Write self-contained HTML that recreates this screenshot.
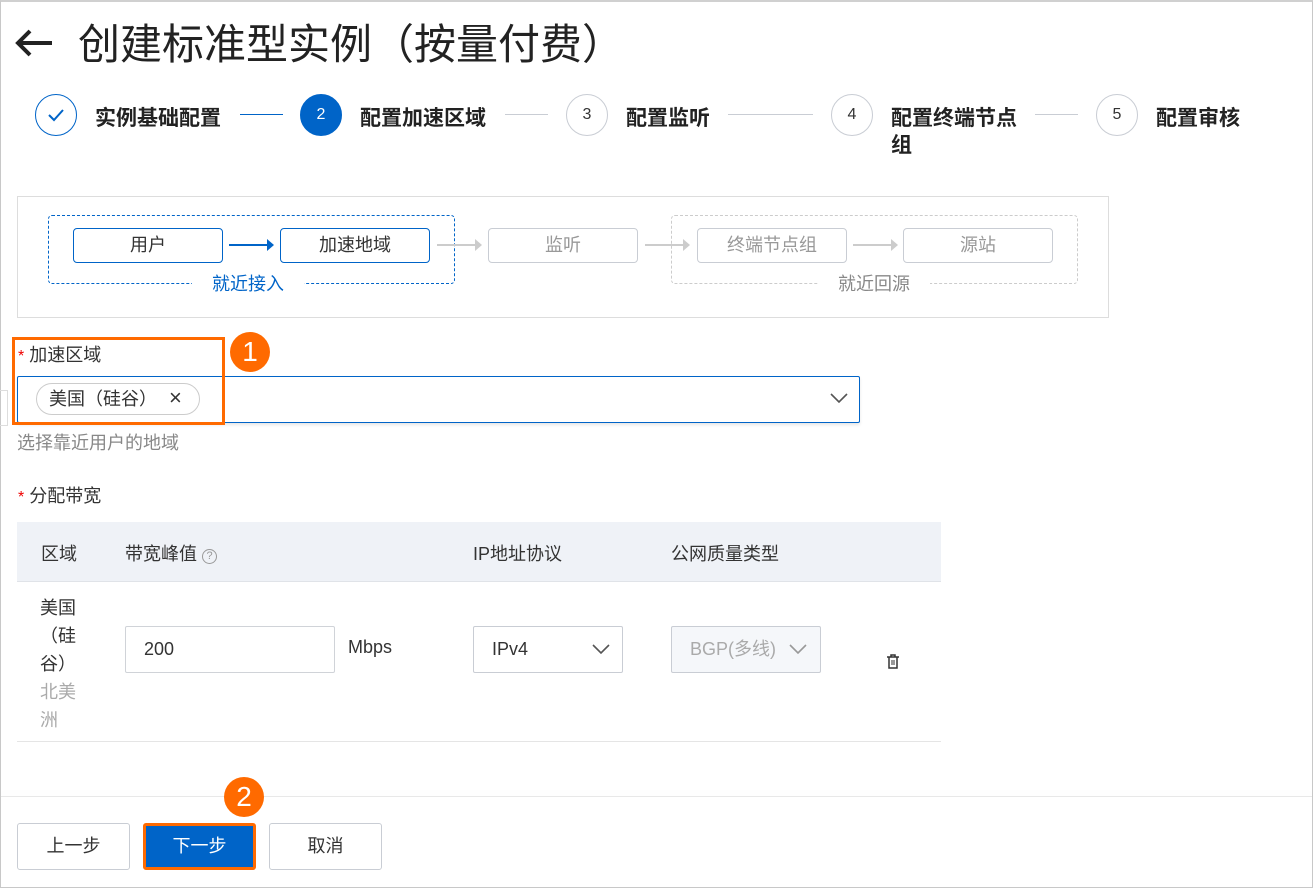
<!DOCTYPE html>
<html><head><meta charset="utf-8"><style>
*{margin:0;padding:0;box-sizing:border-box}
body{width:1313px;height:888px;position:relative;background:#fff;font-family:"Liberation Sans","Noto Sans CJK SC",sans-serif;color:#333;overflow:hidden}
.a{position:absolute}
.frame{left:0;top:0;width:1313px;height:888px;border:1px solid #c8c8c8;border-top:2px solid #d0d0d0}
.circ{width:42px;height:42px;border-radius:50%;border:1px solid #c9cdd4;text-align:center;line-height:40px;font-size:16px;color:#333;top:94px}
.sl{font-size:21px;font-weight:bold;color:#222;top:105px;line-height:27px}
.ln{height:1px;top:114px;background:#c9cdd4}
.nb{height:35px;width:150px;border:1px solid #c9cdd4;border-radius:4px;text-align:center;line-height:33px;font-size:18px;color:#999;top:228px}
.nb.b{border-color:#0064c8;color:#333}
.ar{top:237px;height:16px}
.cap{top:273px;font-size:18px;background:#fff;padding:0 20px;line-height:22px}
.th{top:540px;font-size:18px;color:#333}
.btn{top:823px;height:47px;width:113px;border:1px solid #c9cdd4;border-radius:3px;text-align:center;line-height:45px;font-size:18px;color:#333}
.badge{width:40px;height:40px;border-radius:50%;background:#ff6a00;color:#fff;font-size:28px;text-align:center;line-height:40px;font-family:"Liberation Sans",sans-serif}
</style></head><body>
<div class="a frame"></div>
<svg class="a" style="left:14px;top:28px" width="40" height="30" viewBox="0 0 40 30"><path d="M38 15H4M16 3L4 15l12 12" fill="none" stroke="#222" stroke-width="4"/></svg>
<div class="a" style="left:78px;top:17px;font-size:42px;line-height:56px;color:#222">创建标准型实例（按量付费）</div>

<div class="a circ" style="left:35px;border-color:#0064c8"><svg width="20" height="16" viewBox="0 0 20 16" style="margin-top:12px"><path d="M3 8l5 5 9-10" fill="none" stroke="#0064c8" stroke-width="2"/></svg></div>
<div class="a sl" style="left:95px">实例基础配置</div>
<div class="a ln" style="left:240px;width:43px;background:#0064c8"></div>
<div class="a circ" style="left:300px;background:#0064c8;border-color:#0064c8;color:#fff">2</div>
<div class="a sl" style="left:360px">配置加速区域</div>
<div class="a ln" style="left:505px;width:43px"></div>
<div class="a circ" style="left:566px">3</div>
<div class="a sl" style="left:626px">配置监听</div>
<div class="a ln" style="left:728px;width:85px"></div>
<div class="a circ" style="left:831px">4</div>
<div class="a sl" style="left:891px;width:135px">配置终端节点<br>组</div>
<div class="a ln" style="left:1035px;width:43px"></div>
<div class="a circ" style="left:1096px">5</div>
<div class="a sl" style="left:1156px">配置审核</div>

<div class="a" style="left:17px;top:196px;width:1092px;height:122px;border:1px solid #ddd"></div>
<div class="a" style="left:48px;top:215px;width:407px;height:69px;border:1px dashed #0064c8;border-radius:4px"></div>
<div class="a" style="left:671px;top:215px;width:407px;height:69px;border:1px dashed #ccc;border-radius:4px"></div>
<div class="a nb b" style="left:73px">用户</div>
<div class="a nb b" style="left:280px">加速地域</div>
<div class="a nb" style="left:488px">监听</div>
<div class="a nb" style="left:697px">终端节点组</div>
<div class="a nb" style="left:903px">源站</div>
<svg class="a ar" style="left:229px" width="48" height="16"><path d="M0 8H40" stroke="#0064c8" stroke-width="2"/><path d="M38 2l7 6-7 6z" fill="#0064c8"/></svg>
<svg class="a ar" style="left:437px" width="48" height="16"><path d="M0 8H40" stroke="#ccc" stroke-width="2"/><path d="M38 2l7 6-7 6z" fill="#ccc"/></svg>
<svg class="a ar" style="left:645px" width="48" height="16"><path d="M0 8H40" stroke="#ccc" stroke-width="2"/><path d="M38 2l7 6-7 6z" fill="#ccc"/></svg>
<svg class="a ar" style="left:853px" width="48" height="16"><path d="M0 8H40" stroke="#ccc" stroke-width="2"/><path d="M38 2l7 6-7 6z" fill="#ccc"/></svg>
<div class="a cap" style="left:192px;color:#0064c8">就近接入</div>
<div class="a cap" style="left:818px;color:#888">就近回源</div>

<div class="a" style="left:0;top:390px;width:8px;height:36px;border:1px solid #ddd;border-left:none"></div>
<div class="a" style="left:18px;top:344px;font-size:18px;line-height:22px"><span style="color:#e00;font-size:16px">*</span> 加速区域</div>
<div class="a" style="left:17px;top:376px;width:843px;height:47px;border:1px solid #0064c8;border-radius:2px;box-shadow:0 2px 3px rgba(0,0,0,.1)"></div>
<div class="a" style="left:36px;top:383px;width:164px;height:32px;border:1px solid #ccc;border-radius:16px;font-size:18px;line-height:30px;padding-left:12px">美国（硅谷）<span style="position:absolute;left:132px;font-size:22px;color:#333;line-height:28px">×</span></div>
<svg class="a" style="left:830px;top:392px" width="18" height="12"><path d="M1 2l8 8 8-8" fill="none" stroke="#555" stroke-width="1.6"/></svg>
<div class="a" style="left:12px;top:337px;width:213px;height:88px;border:3px solid #ff6a00"></div>
<div class="a badge" style="left:230px;top:332px">1</div>
<div class="a" style="left:17px;top:432px;font-size:18px;color:#888;line-height:22px">选择靠近用户的地域</div>
<div class="a" style="left:18px;top:485px;font-size:18px;line-height:22px"><span style="color:#e00;font-size:16px">*</span> 分配带宽</div>

<div class="a" style="left:17px;top:522px;width:924px;height:60px;background:#eff2f7;border-bottom:1px solid #e0e3e8"></div>
<div class="a th" style="left:41px">区域</div>
<div class="a th" style="left:125px">带宽峰值 <span style="display:inline-block;width:15px;height:15px;border:1px solid #999;border-radius:50%;font-size:11px;line-height:13px;text-align:center;color:#999;vertical-align:1px">?</span></div>
<div class="a th" style="left:473px">IP地址协议</div>
<div class="a th" style="left:671px">公网质量类型</div>
<div class="a" style="left:17px;top:741px;width:924px;height:1px;background:#e5e5e5"></div>
<div class="a" style="left:40px;top:594px;width:44px;font-size:18px;line-height:28px">美国<br>（硅<br>谷）<br><span style="color:#aaa">北美<br>洲</span></div>
<div class="a" style="left:125px;top:626px;width:210px;height:47px;border:1px solid #d0d3d8;border-radius:2px;font-size:18px;line-height:45px;padding-left:18px">200</div>
<div class="a" style="left:348px;top:637px;font-size:18px">Mbps</div>
<div class="a" style="left:473px;top:626px;width:150px;height:47px;border:1px solid #c9cdd4;border-radius:2px;font-size:18px;line-height:45px;padding-left:18px">IPv4</div>
<svg class="a" style="left:592px;top:643px" width="18" height="12"><path d="M1 2l8 8 8-8" fill="none" stroke="#555" stroke-width="1.6"/></svg>
<div class="a" style="left:671px;top:626px;width:150px;height:47px;border:1px solid #c9cdd4;border-radius:2px;background:#f5f7fa;font-size:18px;line-height:45px;padding-left:18px;color:#aaa">BGP(多线)</div>
<svg class="a" style="left:789px;top:643px" width="18" height="12"><path d="M1 2l8 8 8-8" fill="none" stroke="#999" stroke-width="1.6"/></svg>
<svg class="a" style="left:886px;top:653px" width="14" height="16" viewBox="0 0 14 16"><path d="M1 4h12M5 4V2h4v2M3 4v11h8V4" fill="none" stroke="#333" stroke-width="1.5"/><path d="M6 7v5M8 7v5" stroke="#333"/></svg>

<div class="a" style="left:1px;top:796px;width:1311px;height:1px;background:#e8e8e8;box-shadow:0 -3px 6px rgba(0,0,0,.05)"></div>
<div class="a btn" style="left:17px">上一步</div>
<div class="a btn" style="left:143px;background:#0064c8;color:#fff;border:3px solid #ff6a00;line-height:41px">下一步</div>
<div class="a btn" style="left:269px">取消</div>
<div class="a badge" style="left:224px;top:777px">2</div>
</body></html>
